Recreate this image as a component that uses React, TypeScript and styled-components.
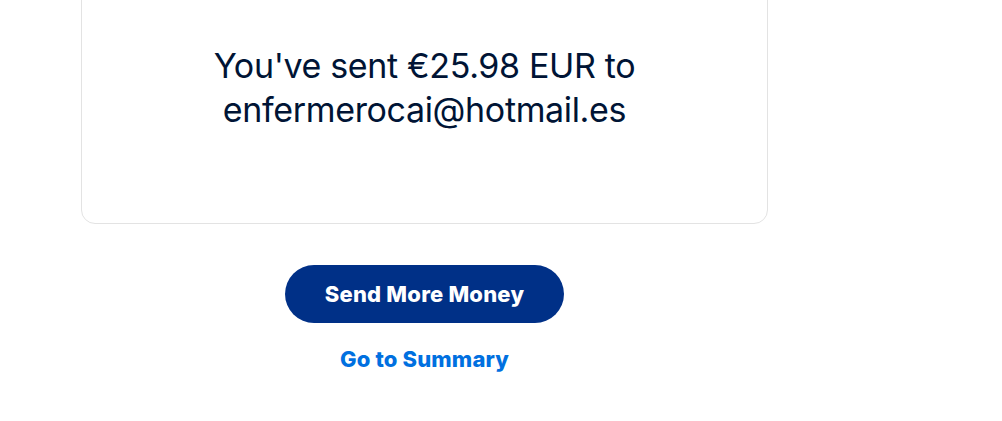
import React from "react";
import styled, { createGlobalStyle } from "styled-components";

const Global = createGlobalStyle`
  html, body { margin: 0; padding: 0; background: #ffffff; }
  body { font-family: Inter, "Noto Sans", Arial, sans-serif; overflow: hidden; }
`;

const Page = styled.div`
  width: 1002px;
  height: 421px;
  overflow: hidden;
  padding-left: 81px;
  box-sizing: border-box;
`;

const Column = styled.div`
  width: 687px;
  display: flex;
  flex-direction: column;
  align-items: center;
`;

const Card = styled.div`
  width: 100%;
  box-sizing: border-box;
  margin-top: -40px;
  height: 264px;
  border: 1px solid #e3e3e3;
  border-radius: 14px;
  display: flex;
  justify-content: center;
  padding-top: 83px;
`;

const Message = styled.p`
  margin: 0;
  text-align: center;
  font-size: 34px;
  line-height: 44px;
  color: #001435;
  letter-spacing: -0.35px;
`;

const PrimaryButton = styled.button`
  margin-top: 41px;
  width: 279px;
  height: 58px;
  border: none;
  border-radius: 29px;
  background: #003087;
  color: #ffffff;
  font-family: Inter, "Noto Sans", Arial, sans-serif;
  font-weight: 800;
  font-size: 22px;
  letter-spacing: 0.2px;
  cursor: pointer;
`;

const LinkButton = styled.a`
  margin-top: 23px;
  color: #0070e0;
  font-weight: 800;
  font-size: 22px;
  line-height: 26px;
  letter-spacing: 0.15px;
  text-decoration: none;
  cursor: pointer;
`;

export default function App() {
  return (
    <>
      <Global />
      <Page>
        <Column>
          <Card>
            <Message>
              You've sent €25.98 EUR to
              <br />
              enfermerocai@hotmail.es
            </Message>
          </Card>
          <PrimaryButton>Send More Money</PrimaryButton>
          <LinkButton>Go to Summary</LinkButton>
        </Column>
      </Page>
    </>
  );
}
